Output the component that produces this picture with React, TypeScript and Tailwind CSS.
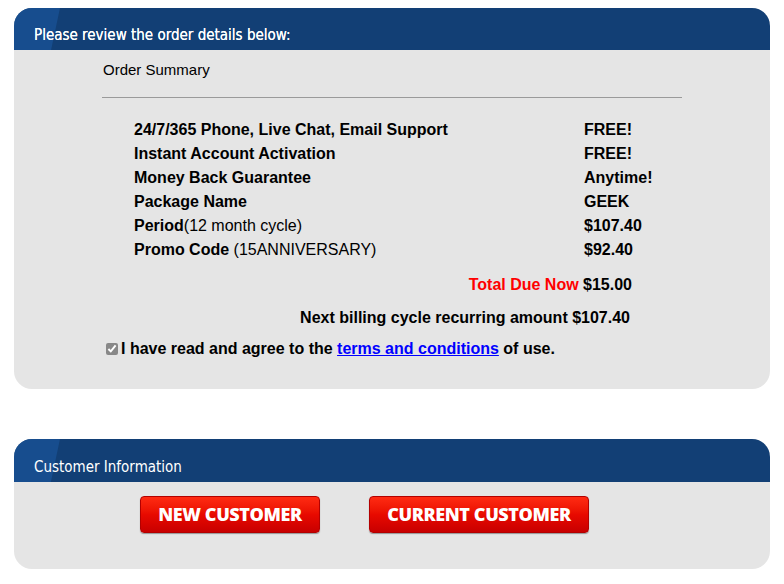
import React from 'react';

const rows = [
  { label: '24/7/365 Phone, Live Chat, Email Support', value: 'FREE!' },
  { label: 'Instant Account Activation', value: 'FREE!' },
  { label: 'Money Back Guarantee', value: 'Anytime!' },
  { label: 'Package Name', value: 'GEEK' },
  { label: 'Period', note: '(12 month cycle)', value: '$107.40' },
  { label: 'Promo Code', note: ' (15ANNIVERSARY)', value: '$92.40' },
];

const PanelHeader = ({ title, first }: { title: string; first?: boolean }) => (
  <div className="relative overflow-hidden rounded-t-[18px] bg-[#123f75]">
    <div className="absolute -left-10 -top-6 h-24 w-[80px] rotate-[12deg] bg-[#1a5498] opacity-70" />
    <div
      className={`relative pl-5 text-[15px] text-white font-['DejaVu_Sans_Condensed','DejaVu_Sans',sans-serif] ${
        first ? 'h-[42px] pt-[16px] [text-shadow:0_0_0.4px_#fff]' : 'h-[43px] pt-[17px]'
      }`}
    >
      {title}
    </div>
  </div>
);

const RedButton = ({ label, w }: { label: string; w: string }) => (
  <button
    className={`${w} h-[37px] rounded-[4px] border border-[#b30000] bg-gradient-to-b from-[#ff2a12] via-[#e80a00] to-[#c80000] text-white text-[18px] font-extrabold tracking-[-0.4px] font-['Open_Sans',sans-serif] shadow-[0_1px_1px_rgba(0,0,0,0.35)]`}
  >
    {label}
  </button>
);

export default function App() {
  return (
    <div className="min-h-[584px] w-[784px] bg-white px-[14px] pt-[8px] font-['Liberation_Sans',Arial,sans-serif] text-black">
      <div className="rounded-[18px] bg-[#e5e5e5]">
        <PanelHeader title="Please review the order details below:" first />
        <div className="pb-[28px]">
          <div className="ml-[88px] mr-[88px] pt-[11px]">
            <div className="pl-px text-[15px] leading-[18px]">Order Summary</div>
            <div className="mt-[18px] h-px bg-[#9a9a9a]" />
          </div>
          <div className="mt-[20px] ml-[120px] w-[520px] text-[16px] font-bold leading-[24px]">
            {rows.map((r) => (
              <div key={r.label} className="flex">
                <div className="w-[450px]">
                  {r.label}
                  {r.note && <span className="font-normal">{r.note}</span>}
                </div>
                <div>{r.value}</div>
              </div>
            ))}
          </div>
          <div className="mt-[11px] ml-[120px] w-[498px] text-right text-[16px] font-bold leading-[24px]">
            <span className="text-[#ff0000]">Total Due Now</span> $15.00
          </div>
          <div className="mt-[9px] ml-[120px] w-[496px] text-right text-[16px] font-bold leading-[24px]">
            Next billing cycle recurring amount $107.40
          </div>
          <label className="mt-[7px] ml-[92px] flex items-center gap-[3px] text-[16px] font-bold leading-[24px]">
            <input type="checkbox" defaultChecked className="h-[12px] w-[12px] accent-[#888]" />
            <span>
              I have read and agree to the{' '}
              <a href="#" className="text-[#0000ff] underline">
                terms and conditions
              </a>{' '}
              of use.
            </span>
          </label>
        </div>
      </div>

      <div className="mt-[50px] rounded-[18px] bg-[#e5e5e5]">
        <PanelHeader title="Customer Information" />
        <div className="flex h-[87px] items-start gap-[49px] pl-[126px] pt-[14px]">
          <RedButton label="NEW CUSTOMER" w="w-[180px]" />
          <RedButton label="CURRENT CUSTOMER" w="w-[220px]" />
        </div>
      </div>
    </div>
  );
}
